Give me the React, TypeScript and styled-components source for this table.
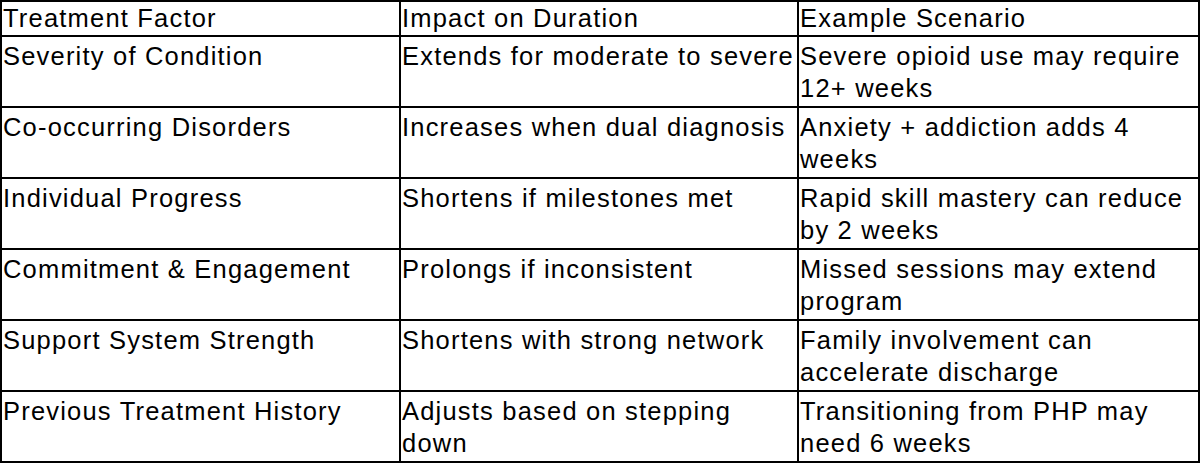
import React from "react";
import styled, { createGlobalStyle } from "styled-components";

const GlobalStyle = createGlobalStyle`
  html, body {
    margin: 0;
    padding: 0;
    background: #ffffff;
  }
  body {
    font-family: "Liberation Sans", Arial, sans-serif;
  }
`;

const Table = styled.table`
  border-collapse: collapse;
  width: 1198px;
  table-layout: fixed;
  font-family: "Liberation Sans", Arial, sans-serif;
  font-size: 25.5px;
  letter-spacing: 1.2px;
  line-height: 31.5px;
  color: #000;
  border: 2px solid #000;
`;

const Col = styled.col<{ $w: number }>`
  width: ${(p) => p.$w}px;
`;

const Row = styled.tr<{ $header?: boolean }>`
  height: ${(p) => (p.$header ? "35px" : "71px")};
`;

const Cell = styled.td<{ $header?: boolean }>`
  border: 2px solid #000;
  vertical-align: top;
  text-align: left;
  font-weight: normal;
  padding: ${(p) => (p.$header ? "1px 2px 0 1px" : "4px 2px 0 1px")};
  word-wrap: break-word;
`;

const columns = [399, 398, 401];

const headers = ["Treatment Factor", "Impact on Duration", "Example Scenario"];

const rows: [string, string, string][] = [
  ["Severity of Condition", "Extends for moderate to severe", "Severe opioid use may require 12+ weeks"],
  ["Co-occurring Disorders", "Increases when dual diagnosis", "Anxiety + addiction adds 4 weeks"],
  ["Individual Progress", "Shortens if milestones met", "Rapid skill mastery can reduce by 2 weeks"],
  ["Commitment & Engagement", "Prolongs if inconsistent", "Missed sessions may extend program"],
  ["Support System Strength", "Shortens with strong network", "Family involvement can accelerate discharge"],
  ["Previous Treatment History", "Adjusts based on stepping down", "Transitioning from PHP may need 6 weeks"],
];

export default function App() {
  return (
    <>
      <GlobalStyle />
      <Table>
        <colgroup>
          {columns.map((w, i) => (
            <Col key={i} $w={w} />
          ))}
        </colgroup>
        <thead>
          <Row $header>
            {headers.map((h) => (
              <Cell as="th" $header key={h}>
                {h}
              </Cell>
            ))}
          </Row>
        </thead>
        <tbody>
          {rows.map((r) => (
            <Row key={r[0]}>
              {r.map((c, i) => (
                <Cell key={i}>{c}</Cell>
              ))}
            </Row>
          ))}
        </tbody>
      </Table>
    </>
  );
}
